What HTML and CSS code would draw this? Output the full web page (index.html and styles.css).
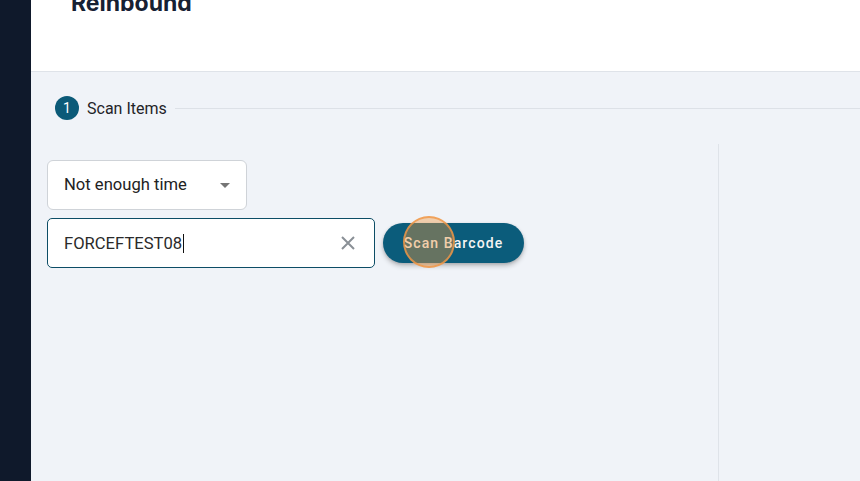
FILE: index.html
```html
<!DOCTYPE html>
<html>
<head>
<meta charset="utf-8">
<link rel="stylesheet" href="styles.css">
</head>
<body>
<div class="app">
  <aside class="sidebar"></aside>
  <main class="main">
    <header class="header"><h1 class="title">Reinbound</h1></header>
    <section class="content">
      <div class="stepper">
        <span class="step-num">1</span>
        <span class="step-label">Scan Items</span>
        <span class="step-line"></span>
      </div>
      <div class="columns">
        <div class="left">
          <div class="select">
            <span>Not enough time</span>
            <svg class="caret" width="10" height="5" viewBox="0 0 10 5"><path d="M0 0 L10 0 L5 5 Z" fill="#757575"/></svg>
          </div>
          <div class="scan-row">
            <div class="input">
              <span class="value">FORCEFTEST08</span><span class="cursor"></span>
              <svg class="clear" width="14" height="14" viewBox="0 0 14 14"><path d="M1 1 L13 13 M13 1 L1 13" stroke="#8a9096" stroke-width="2"/></svg>
            </div>
            <button class="btn">Scan Barcode<span class="click"></span></button>
          </div>
        </div>
        <div class="right"></div>
      </div>
    </section>
  </main>
</div>
</body>
</html>
```
FILE: styles.css
```css
* { box-sizing: border-box; }
html, body { margin: 0; padding: 0; height: 100%; }
body { font-family: Roboto, "Liberation Sans", sans-serif; background: #f0f3f8; overflow: hidden; }
.app { display: flex; height: 481px; }
.sidebar { width: 31px; background: #0f192b; flex: none; }
.main { flex: 1; display: flex; flex-direction: column; }
.header { height: 72px; background: #fff; border-bottom: 1px solid #dfe3e9; padding-left: 40px; flex: none; }
.title { margin: 0; margin-top: -11px; font-family: Inter, Roboto, sans-serif; font-weight: 700; font-size: 23px; line-height: 28px; color: #162033; }
.content { flex: 1; display: flex; flex-direction: column; }
.stepper { display: flex; align-items: center; height: 72px; padding-left: 24px; }
.step-num { width: 24px; height: 24px; border-radius: 50%; background: #0b5a78; color: #fff; font-size: 14px; display: flex; align-items: center; justify-content: center; flex: none; }
.step-label { margin-left: 8px; font-size: 16px; color: #1f2328; }
.step-line { flex: 1; height: 1px; background: #dde1e7; margin-left: 8px; }
.columns { flex: 1; display: flex; }
.left { width: 688px; border-right: 1px solid #dfe3e9; padding: 16px 16px 0 16px; display: flex; flex-direction: column; gap: 8px; }
.right { flex: 1; }
.select { width: 200px; height: 50px; background: #fff; border: 1px solid #cfd3d8; border-radius: 6px; display: flex; align-items: center; padding: 0 16px; font-size: 16.6px; color: #222; justify-content: space-between; }
.select span { margin-top: -2px; }
.scan-row { display: flex; align-items: center; gap: 8px; }
.input { width: 328px; height: 50px; background: #fff; border: 1px solid #0c4d66; border-radius: 5px; display: flex; align-items: center; padding: 0 19px 0 16px; font-size: 16.6px; color: #2a2a2a; }
.cursor { width: 1px; height: 19px; background: #111; margin-left: 1px; }
.clear { margin-left: auto; }
.btn { position: relative; height: 40px; width: 141px; border: none; border-radius: 20px; background: #0b5c7b; color: #f4f4f4; font-family: Roboto, sans-serif; font-weight: 500; font-size: 14px; letter-spacing: 1.1px; box-shadow: 0 3px 5px rgba(0,0,0,0.22), 0 1px 3px rgba(0,0,0,0.12); padding: 0; margin-top: 0; }
.click { position: absolute; left: 20px; top: -7px; width: 52px; height: 52px; border-radius: 50%; background: rgba(240,150,60,0.4); border: 2px solid rgba(240,150,70,0.8); }
```
